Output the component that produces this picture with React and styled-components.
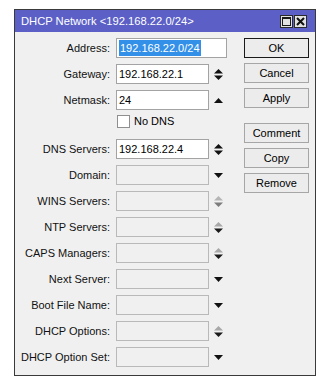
import React from "react";
import styled, { createGlobalStyle } from "styled-components";

const GlobalStyle = createGlobalStyle`
  html, body { margin: 0; padding: 0; background: #ffffff; }
  body { font-family: "Liberation Sans", Arial, sans-serif; }
`;

const Window = styled.div`
  box-sizing: border-box;
  margin: 9px 0 0 14px;
  width: 302px;
  height: 367px;
  border: 1px solid #3a3a3a;
  background: #f0f0f0;
  display: flex;
  flex-direction: column;
`;

const TitleBar = styled.div`
  height: 22px;
  background: #5b5fc6;
  display: flex;
  align-items: center;
  padding: 0 8px 0 6px;
  color: #ffffff;
  font-size: 11.2px;
`;

const TitleText = styled.div`
  flex: 1;
  white-space: nowrap;
`;

const TitleButtons = styled.div`
  display: flex;
  gap: 1px;
`;

const TitleButton = styled.div`
  box-sizing: border-box;
  width: 13px;
  height: 13px;
  background: #e2e2e2;
  border: 1px solid #2a2a2a;
  display: flex;
  align-items: center;
  justify-content: center;
`;

const Body = styled.div`
  display: flex;
  padding: 6px 6px 0 0;
`;

const Form = styled.div`
  display: flex;
  flex-direction: column;
  gap: 6px;
`;

const Row = styled.div`
  display: grid;
  grid-template-columns: 95px 111px;
  column-gap: 6px;
  align-items: center;
  height: 20px;
`;

const CheckRow = styled.div`
  display: flex;
  align-items: center;
  gap: 4px;
  height: 14px;
  margin: -2px 0 5px 102px;
  font-size: 11px;
  color: #000;
`;

const CheckBox = styled.div`
  box-sizing: border-box;
  width: 13px;
  height: 13px;
  background: #ffffff;
  border: 1px solid #8f8f8f;
`;

const Label = styled.div`
  text-align: right;
  font-size: 11px;
  color: #111;
  white-space: nowrap;
`;

const Field = styled.div`
  display: flex;
  height: 20px;
`;

const TextBox = styled.div`
  box-sizing: border-box;
  width: ${(p) => (p.$wide ? "111px" : "93px")};
  height: 20px;
  border: 1px solid ${(p) => (p.$disabled ? "#b9b9b9" : "#a3a3a3")};
  background: ${(p) => (p.$disabled ? "#f0f0f0" : "#ffffff")};
  font-size: 11px;
  color: #000;
  display: flex;
  align-items: center;
  padding: 0 2px;
  white-space: nowrap;
`;

const Selected = styled.span`
  background: #3390e8;
  color: #ffffff;
  height: 16px;
  line-height: 16px;
  padding: 0 1px;
`;

const ArrowBox = styled.div`
  width: 18px;
  display: flex;
  align-items: center;
  justify-content: center;
`;

const Buttons = styled.div`
  margin-left: 17px;
  display: flex;
  flex-direction: column;
  gap: 5px;
  width: 65px;
`;

const Button = styled.div`
  box-sizing: border-box;
  height: 20px;
  border: 1px solid ${(p) => (p.$default ? "#1a1a1a" : "#a6a6a6")};
  background: #ececec;
  font-size: 11px;
  color: #000;
  display: flex;
  align-items: center;
  justify-content: center;
  margin-top: ${(p) => (p.$spaced ? "10px" : "0")};
`;

const Arrow = ({ kind, up = "#111", down = "#111" }) => {
  if (kind === "updown")
    return (
      <svg width="9" height="11" viewBox="0 0 9 11">
        <polygon points="4.5,0 9,4.5 0,4.5" fill={up} />
        <polygon points="0,6.5 9,6.5 4.5,11" fill={down} />
      </svg>
    );
  if (kind === "up")
    return (
      <svg width="9" height="5" viewBox="0 0 9 5">
        <polygon points="4.5,0 9,5 0,5" fill={up} />
      </svg>
    );
  if (kind === "down")
    return (
      <svg width="9" height="5" viewBox="0 0 9 5">
        <polygon points="0,0 9,0 4.5,5" fill={down} />
      </svg>
    );
  return null;
};

const rows1 = [
  { label: "Gateway:", value: "192.168.22.1", arrow: "updown" },
  { label: "Netmask:", value: "24", arrow: "up" },
];

const rows2 = [
  { label: "DNS Servers:", value: "192.168.22.4", arrow: "updown" },
  { label: "Domain:", disabled: true, arrow: "down" },
  { label: "WINS Servers:", disabled: true, arrow: "updown", up: "#b5b5b5", down: "#7c7c7c" },
  { label: "NTP Servers:", disabled: true, arrow: "updown", up: "#a8a8a8", down: "#1a1a1a" },
  { label: "CAPS Managers:", disabled: true, arrow: "updown", up: "#a8a8a8", down: "#1a1a1a" },
  { label: "Next Server:", disabled: true, arrow: "down" },
  { label: "Boot File Name:", disabled: true, arrow: "down" },
  { label: "DHCP Options:", disabled: true, arrow: "updown", up: "#a8a8a8", down: "#1a1a1a" },
  { label: "DHCP Option Set:", disabled: true, arrow: "down" },
];

const FieldRow = ({ r }) => (
  <Row>
    <Label>{r.label}</Label>
    <Field>
      <TextBox $disabled={r.disabled}>{r.value || ""}</TextBox>
      <ArrowBox>
        <Arrow kind={r.arrow} up={r.up} down={r.down} />
      </ArrowBox>
    </Field>
  </Row>
);

export default function App() {
  return (
    <>
      <GlobalStyle />
      <Window>
        <TitleBar>
          <TitleText>DHCP Network &lt;192.168.22.0/24&gt;</TitleText>
          <TitleButtons>
            <TitleButton>
              <svg width="9" height="9" viewBox="0 0 9 9">
                <rect x="0.5" y="0.5" width="8" height="8" fill="none" stroke="#1a1a1a" strokeWidth="1" />
                <rect x="0" y="0" width="9" height="2" fill="#1a1a1a" />
              </svg>
            </TitleButton>
            <TitleButton>
              <svg width="9" height="9" viewBox="0 0 9 9">
                <path d="M1 1 L8 8 M8 1 L1 8" stroke="#111" strokeWidth="2" />
              </svg>
            </TitleButton>
          </TitleButtons>
        </TitleBar>
        <Body>
          <Form>
            <Row>
              <Label>Address:</Label>
              <Field>
                <TextBox $wide>
                  <Selected>192.168.22.0/24</Selected>
                </TextBox>
              </Field>
            </Row>
            {rows1.map((r) => (
              <FieldRow key={r.label} r={r} />
            ))}
            <CheckRow>
              <CheckBox />
              <span>No DNS</span>
            </CheckRow>
            {rows2.map((r) => (
              <FieldRow key={r.label} r={r} />
            ))}
          </Form>
          <Buttons>
            <Button $default>OK</Button>
            <Button>Cancel</Button>
            <Button>Apply</Button>
            <Button $spaced>Comment</Button>
            <Button>Copy</Button>
            <Button>Remove</Button>
          </Buttons>
        </Body>
      </Window>
    </>
  );
}
